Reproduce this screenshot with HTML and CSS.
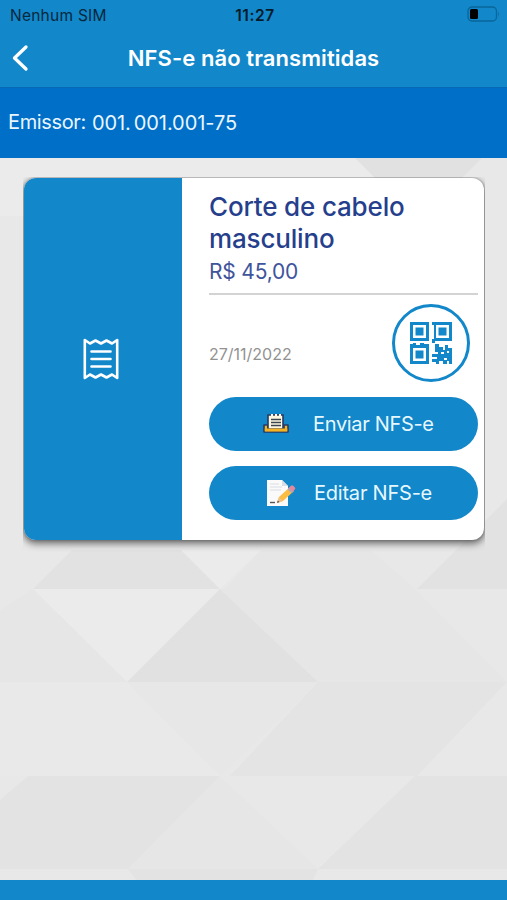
FILE: index.html
```html
<!DOCTYPE html>
<html lang="pt-BR">
<head>
<meta charset="utf-8">
<title>NFS-e não transmitidas</title>
<link rel="stylesheet" href="styles.css">
</head>
<body>
<div class="app">
  <header class="top">
    <div class="status">
      <span class="carrier">Nenhum SIM</span>
      <span class="clock">11:27</span>
      <svg class="battery" width="33" height="16" viewBox="0 0 33 16"><rect x="1" y="1" width="28.5" height="14" rx="4" fill="none" stroke="#0a659a" stroke-width="1.3"/><rect x="3" y="3" width="8" height="10" rx="1.5" fill="#000"/><path d="M31 5.500q1.700 2.500 0 5z" fill="#0a659a"/></svg>
    </div>
    <div class="nav">
      <svg class="back" width="18" height="28" viewBox="0 0 18 28"><path d="M15 3 3.500 14 15 25" fill="none" stroke="#fff" stroke-width="3.3" stroke-linecap="round" stroke-linejoin="round"/></svg>
      <h1>NFS-e não transmitidas</h1>
    </div>
  </header>
  <div class="issuer"><span class="issuer-label">Emissor:</span><span class="issuer-id">001.<i></i>001.001-75</span></div>
  <main>
    <svg class="backdrop" viewBox="0 158 507 722" preserveAspectRatio="none">
      <path fill="#e8e8e8" d="M0 158h507v722H0z"/>
      <path fill="#ebebeb" d="M0 158h355l20 20H24v38H0z"/>
      <path fill="#e1e1e1" d="M355 158h127l-20 20h-87z"/>
      <path fill="#e2e2e2" d="M33 589 72 550h109l39 39zM417 589l90-90v90z"/>
      <path fill="#ebebeb" d="M181 550h80l-41 39zM33 589h187l-93 93z"/>
      <path fill="#e6e6e6" d="M261 550h110l44 39H225zM220 589h195l92 93H318zM0 610l33-21 94 93H0z"/>
      <path fill="#e1e1e1" d="m220 589 98 93H127z"/>
      <path fill="#e9e9e9" d="M0 682h127l93 94H0z"/>
      <path fill="#e7e7e7" d="M127 682h191l-98 94z"/>
      <path fill="#e4e4e4" d="M318 682h189l-90 94H230z"/>
      <path fill="#e3e3e3" d="M0 800l28-24h192l-92 93H0zM415 776h92v93H318z"/>
      <path fill="#e8e8e8" d="M220 776h192l-94 93z"/>
      <path fill="#e6e6e6" d="m220 776 98 93H128z"/>
      <path fill="#e3e3e3" d="M128 869h190l-5 11H136z"/>
    </svg>
    <div class="card-clip">
      <article class="card">
        <div class="card-side">
          <svg width="36" height="42" viewBox="0 0 36 42" fill="none" stroke="#fff" stroke-width="2.6" stroke-linejoin="round" stroke-linecap="round"><path d="M1.800 2 7 5.500 12.500 2.500 18 5.500 23.500 2.500 29 5.500 34.200 2v38L29 36.500 23.500 39.500 18 36.500 12.500 39.500 7 36.500 1.800 40z"/><path d="M8.500 13.500h19M8.500 21h19M8.500 28.500h19"/></svg>
        </div>
        <div class="card-body">
          <h2><span>Corte de cabelo</span><br><span class="line-two">masculino</span></h2>
          <p class="price">R$ 45,00</p>
          <div class="meta">
            <time>27/11/2022</time>
            <span class="qr"><svg width="42" height="42" viewBox="0 0 42 42"><path fill="#1287c9" fill-rule="evenodd" d="M0 0h19v19H0zM3 3v13h13V3zM5.500 5.500h8v8h-8zM22 0h20v19H25v2h-3v-4h2V3h-2zM26 3v13h13V3zM28.500 5.500h8v8h-8zM0 22h3v-1h3v2h4v-2h4v1h5v20H0zM3 26v13h13V26zM5.500 28.500h8v8h-8z"/><path fill="#1287c9" d="M25 22h4v3h4v3h2v-5h3v3h4v16h-3v-3h-2v3h-4v-3h-4v3h-3v-2h-4v-3h5v-2h-5v-3h6v-2h-3v-4z"/><path fill="#fff" d="M31 30h3v2h-3zM37 29h2v2h-2zM34 36h3v2h-3z"/></svg></span>
          </div>
          <button class="send"><svg width="28" height="22" viewBox="0 0 28 22"><path d="M2 12h4v4h16v-4h4v7H2z" fill="#f5b324" stroke="#263a65" stroke-width="1.6" stroke-linejoin="round"/><path d="M6 16V2h15v14z" fill="#fff8df" stroke="#263a65" stroke-width="1.6"/><path d="M9 2h2M13 2h2M17 2h2" stroke="#fff8df" stroke-width="2"/><path d="M9 6.500h10M9 9.500h10M9 12.500h10" stroke="#3b4654" stroke-width="1.300"/><path d="M2.800 15.500h22.500v3H2.800z" fill="#f5b324"/></svg><span>Enviar NFS-e</span></button>
          <button class="edit"><svg width="30" height="28" viewBox="0 0 30 28"><path d="M1 1h15l6 6v20H1z" fill="#fafafa"/><path d="M16 1v6h6z" fill="#dcdde3"/><path d="M4 5h9M4 8h12M4 11h11" stroke="#d8dce4" stroke-width="1"/><path d="M4 23.500h5" stroke="#555" stroke-width="1.400"/><path d="m11 24 2-6L24 8l4 4-11 10z" fill="#fbbd43"/><path d="m11 24 2-6 4 4z" fill="#edc28b"/><path d="m11 24 .8-2.500 1.700 1.600z" fill="#555"/><path d="m22 9.800 3-3q1-1 2.200 0l1.500 1.500q1.300 1.200 0 2.300L26 13.500z" fill="#e7879d"/><path d="m21.500 10.300 1.500-1.500 4 4-1.500 1.400z" fill="#b6a6b4"/></svg><span>Editar NFS-e</span></button>
        </div>
      </article>
    </div>
  </main>
  <footer></footer>
</div>
</body>
</html>
```
FILE: styles.css
```css
* { box-sizing: border-box; }
body { margin: 0; font-family: Inter, "Liberation Sans", sans-serif; }
h1, h2, p { margin: 0; }
.app { width: 507px; height: 900px; display: flex; flex-direction: column; overflow: hidden; }
.top { height: 87px; background: #1287c9; color: #fff; }
.status { height: 29px; display: grid; grid-template-columns: 1fr auto 1fr; align-items: center; padding: 1px 7px 0 10px; color: #07283e; }
.carrier { font-size: 15.5px; letter-spacing: .25px; }
.clock { font-size: 15.5px; font-weight: 600; color: #061b2a; letter-spacing: .6px; }
.battery { justify-self: end; margin-top: -2px; }
.nav { height: 58px; display: grid; grid-template-columns: 40px 1fr 40px; align-items: center; }
.back { margin-left: 11px; }
h1 { text-align: center; font-size: 22px; line-height: 28px; font-weight: 600; letter-spacing: .08px; white-space: nowrap; padding-bottom: 1px; }
.issuer { height: 71px; background: #006fc7; color: #e9f6ff; display: flex; align-items: center; gap: 6px; padding: 0 0 2px 8px; font-size: 20px; box-shadow: inset 0 1px #0869b7; }
.issuer-label { letter-spacing: -.36px; }
.issuer-id { padding-top: 2px; letter-spacing: -.07px; }
.issuer-id i { display: inline-block; width: 3px; }
main { position: relative; height: 722px; padding: 19px 22px 0 23px; }
.backdrop { position: absolute; inset: 0; width: 100%; height: 100%; }
.card-clip { position: relative; height: 375px; padding: 1px 1px 0; overflow: hidden; }
.card { height: 362px; border-radius: 12px; overflow: hidden; background: #fff; display: flex; box-shadow: 0 3px 7px 1px rgba(0,0,0,.5), 0 0 3px rgba(0,0,0,.3); }
.card-side { width: 158px; background: #1287c9; display: flex; align-items: center; justify-content: center; padding-right: 4px; }
.card-body { flex: 1; padding: 13px 6px 0 27px; display: flex; flex-direction: column; }
h2 { height: 64px; font-size: 26px; line-height: 32px; font-weight: 500; letter-spacing: -.16px; color: #263f8d; white-space: nowrap; }
.price { height: 40px; padding-top: 4px; font-size: 21px; line-height: 26px; letter-spacing: -.2px; color: #40549b; border-bottom: 2px solid #d3d3d3; }
.meta { height: 102px; display: flex; justify-content: space-between; align-items: center; padding: 0 8px 7px 0; }
time { font-size: 16px; color: #929292; padding-top: 22px; }
.qr { width: 78px; height: 78px; border: 3px solid #1287c9; border-radius: 50%; display: flex; align-items: center; justify-content: center; }
button { height: 54px; margin: 0 0 15px; padding: 0; border: 0; border-radius: 27px; background: #1287c9; color: #e6f8ff; font: 400 20px/26px Inter, sans-serif; letter-spacing: -.33px; display: flex; align-items: center; white-space: nowrap; }
.send { padding-left: 53px; gap: 23px; }
.edit { padding-left: 57px; gap: 18px; letter-spacing: -.22px; }
footer { height: 20px; background: #1287c9; }
```
